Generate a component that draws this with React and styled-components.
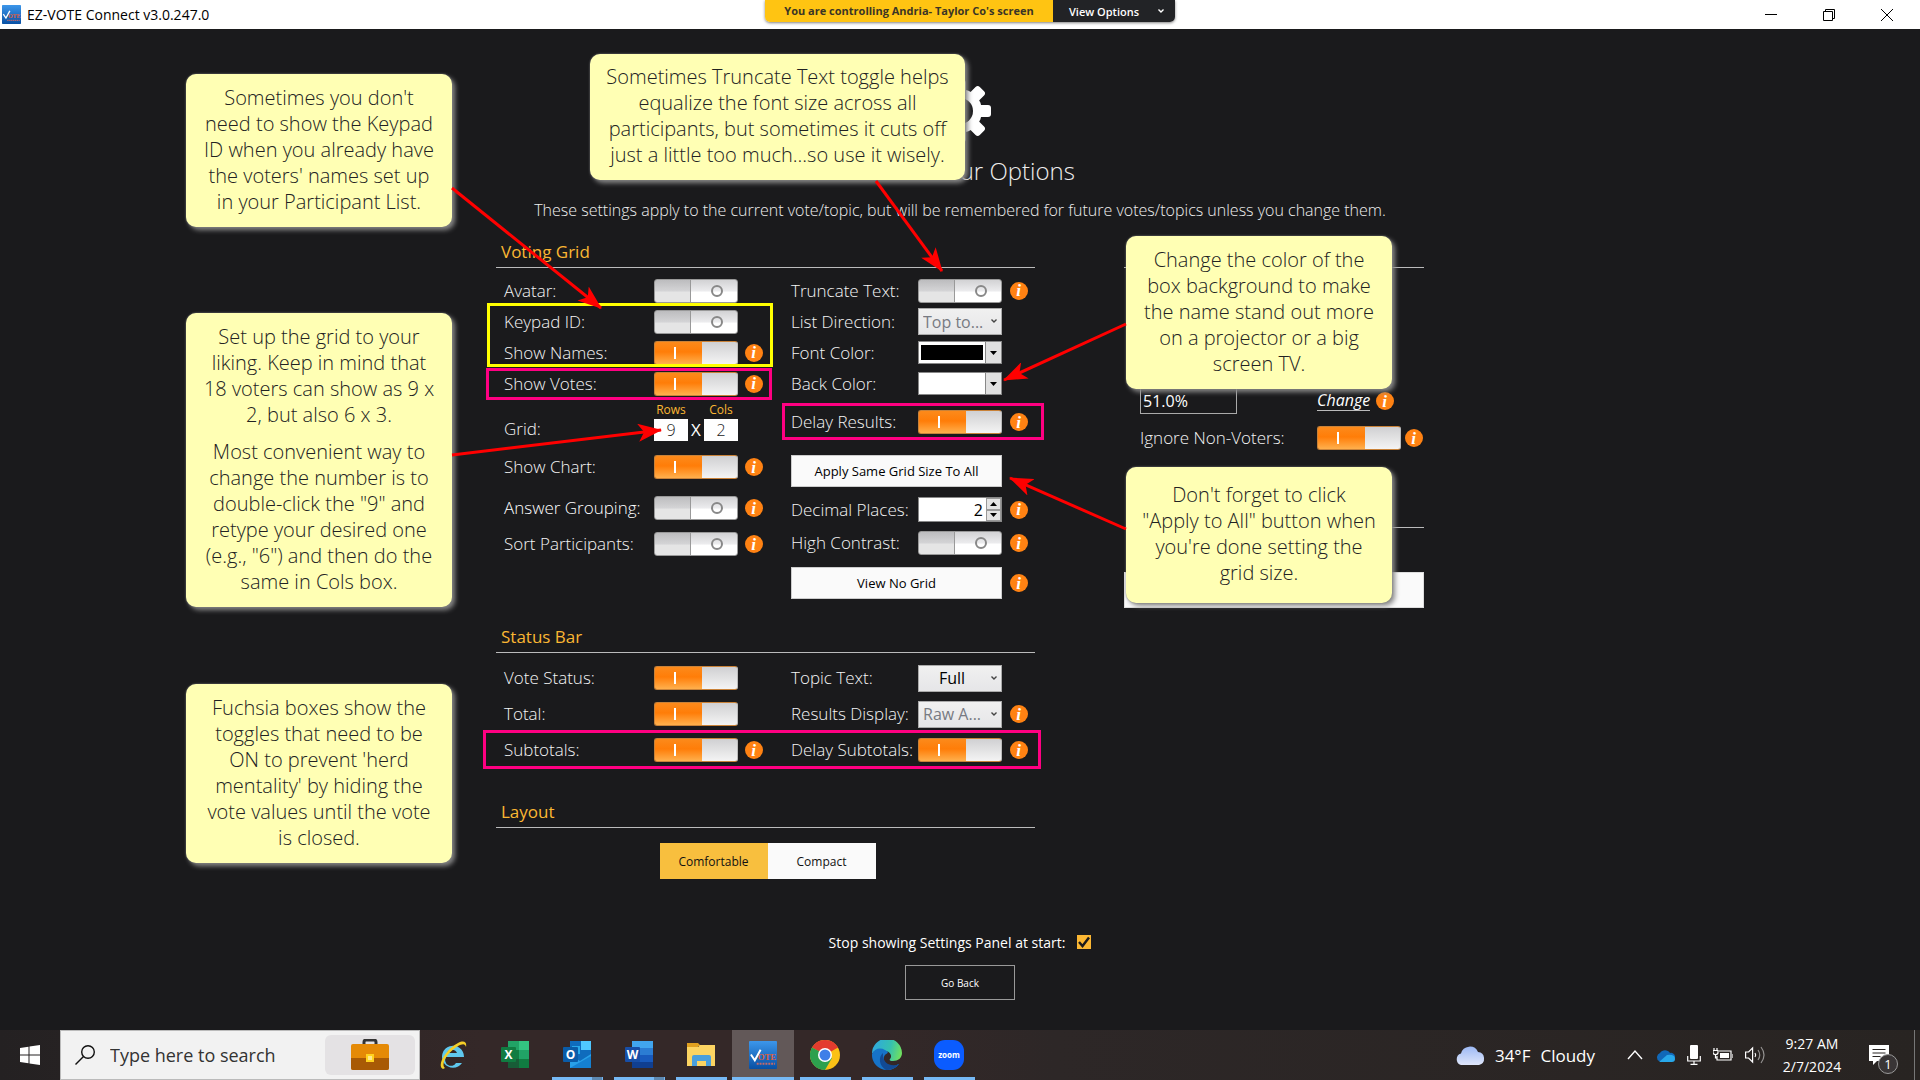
import React, { useState } from 'react'
import styled, { createGlobalStyle, css } from 'styled-components'

const GlobalStyle = createGlobalStyle`
*, *::after{ box-sizing:border-box; }
body{ margin:0; background:#1a1a1c; }
body, button, input, select{ font-family:"Open Sans", "Noto Sans", sans-serif; }
h1, h2, p{ margin:0; font-weight:300; }
`;

const Mark = () => (
  <svg width="100%" height="100%" viewBox="0 0 29 29" aria-hidden="true">
    <defs>
      <linearGradient id="mark" x1="0" y1="0" x2="0" y2="1">
        <stop offset="0" stopColor="#3c96ea" />
        <stop offset="1" stopColor="#0850a4" />
      </linearGradient>
    </defs>
    <rect width="29" height="29" rx="1" fill="url(#mark)" />
    <text x="9" y="20" fontFamily="Liberation Serif" fontWeight="700" fontSize="9" fill="#e0603c">OTE</text>
    <path d="M2 14l4 6L12 9" fill="none" stroke="#fff" strokeWidth="2" />
    <path d="M8 23.500h19" stroke="#c46a6a" strokeWidth="2" strokeDasharray="2 1" />
  </svg>
)

const Gear = () => (
  <svg width="62" height="62" viewBox="-31 -31 62 62" aria-hidden="true">
    <g fill="#fff">
      {[0, 45, 90, 135].map(angle => (
        <rect key={angle} x="-31" y="-6" width="62" height="12" rx="3" transform={`rotate(${angle})`} />
      ))}
      <circle r="22" />
    </g>
    <circle r="13" fill="#1a1a1c" />
  </svg>
)

const Chevron = () => (
  <svg width="8" height="6" viewBox="0 0 8 6" aria-hidden="true">
    <path d="M1.500 1.500L4 4l2.500-2.500" fill="none" stroke="currentColor" strokeWidth="1.400" />
  </svg>
)

const Triangle = ({ up }) => (
  <svg width="7" height="4" viewBox="0 0 7 4" aria-hidden="true">
    <path d={up ? 'M0 4h7L3.500 0z' : 'M0 0h7L3.500 4z'} fill="#000" />
  </svg>
)

const InfoButton = ({ about }) => (
  <Info type="button" aria-label={`About ${about}`}>i</Info>
)

const ToggleRow = ({ id, label, on, info, height, strong }) => {
  const [checked, setChecked] = useState(!!on)
  return (
    <Row $h={height}>
      <Label htmlFor={id} $strong={strong}>{label}</Label>
      <Switch id={id} type="checkbox" role="switch" checked={checked} onChange={() => setChecked(!checked)} />
      {info && <InfoButton about={label} />}
    </Row>
  )
}

const SelectRow = ({ id, label, value, muted, info, height }) => (
  <Row $h={height}>
    <Label htmlFor={id}>{label}</Label>
    <Picker $muted={muted}>
      <select id={id} defaultValue={value} disabled={muted}><option>{value}</option></select>
      <Chevron />
    </Picker>
    {info && <InfoButton about={label} />}
  </Row>
)

const ColorRow = ({ id, label, color }) => (
  <Row>
    <Label htmlFor={id}>{label}</Label>
    <ColorButton id={id} type="button" $color={color}>
      <span />
      <i><Triangle /></i>
    </ColorButton>
  </Row>
)

const arrows = [
  [452, 188, 601, 308],
  [876, 181, 942, 271],
  [1126, 324, 1004, 380],
  [452, 455, 661, 430],
  [1126, 529, 1010, 478],
]

const apps = [
  {
    name: 'Internet Explorer',
    icon: <>
      <path d="M8 17h18a11 11 0 1 0-2 6h-6a5 5 0 0 1-10-6zM9 13a5.500 5.500 0 0 1 10 0z" fill="#5fc8ee" fillRule="evenodd" />
      <path d="M5 29C-2 26 8 9 20 3c6-3 9-1 8 4-1-4-4-3-8-1C10 12 2 24 7 28z" fill="#f5cf27" />
    </>,
  },
  {
    name: 'Excel',
    icon: <>
      <path d="M8 1h21v27H8z" fill="#21a366" /><path d="M19 1h10v9H19z" fill="#33c481" />
      <path d="M8 10h11v9H8z" fill="#107c41" /><path d="M8 19h21v9H8z" fill="#185c37" /><path d="M19 19h10v9H19z" fill="#107c41" />
      <rect x="1" y="7" width="15" height="15" rx="1" fill="#107c41" />
      <text x="8.500" y="19" textAnchor="middle" fontFamily="Open Sans" fontWeight="700" fontSize="12" fill="#fff">X</text>
    </>,
  },
  {
    name: 'Outlook', running: true, stacked: true,
    icon: <>
      <path d="M8 1h21v27H8z" fill="#0f6cbd" /><path d="M19 1h10v9H19z" fill="#50c8ff" /><path d="M10 6h8v8h-8z" fill="#28a8ea" />
      <path d="M8 15l10 6 11-7v14H8z" fill="#28a0e8" /><path d="M8 28l21-12v12z" fill="#1580d0" />
      <rect x="1" y="7" width="15" height="15" rx="1" fill="#0a5ca8" />
      <text x="8.500" y="19" textAnchor="middle" fontFamily="Open Sans" fontWeight="700" fontSize="12" fill="#fff">O</text>
    </>,
  },
  {
    name: 'Word', running: true, stacked: true,
    icon: <>
      <path d="M8 1h21v7H8z" fill="#41a5ee" /><path d="M8 8h21v7H8z" fill="#2b7cd3" />
      <path d="M8 15h21v7H8z" fill="#185abd" /><path d="M8 22h21v6H8z" fill="#103f91" />
      <rect x="1" y="7" width="15" height="15" rx="1" fill="#174ea6" />
      <text x="8.500" y="19" textAnchor="middle" fontFamily="Open Sans" fontWeight="700" fontSize="12" fill="#fff">W</text>
    </>,
  },
  {
    name: 'File Explorer', running: true,
    icon: <>
      <path d="M1 3h11l3 3h-3v4H1z" fill="#e0a020" /><path d="M1 7h11l2-2h15v21H1z" fill="#fcd462" />
      <path d="M6 26V17q0-2 2-2h15q2 0 2 2v9h-5v-5h-9v5z" fill="#4a9fdc" />
    </>,
  },
  { name: 'EZ-VOTE Connect', running: true, active: true },
  {
    name: 'Chrome', running: true,
    icon: <>
      <circle cx="15" cy="15" r="15" fill="#fbc116" />
      <path d="M15 15L2 7.500A15 15 0 0 1 28 7.500z" fill="#e33b2e" /><path d="M15 7.500h13V8H15z" fill="#e33b2e" />
      <path d="M2 7.500A15 15 0 0 0 15 30l7-12z" fill="#2da04e" />
      <circle cx="15" cy="15" r="7" fill="#fff" /><circle cx="15" cy="15" r="5.500" fill="#3f7fe8" />
    </>,
  },
  {
    name: 'Edge', running: true,
    icon: <>
      <defs>
        <linearGradient id="edge" x1="0" y1="0.300" x2="1" y2="0.500">
          <stop offset="0" stopColor="#2fa8e0" /><stop offset="0.600" stopColor="#35c0b0" /><stop offset="1" stopColor="#6fe060" />
        </linearGradient>
      </defs>
      <path d="M0 14A15 15 0 0 1 30 13c0 5-4 8-9 8-3 0-4-1-3-2 3-4-1-8-5-8C6 9 2 10 0 14z" fill="url(#edge)" />
      <path d="M0 14c2-5 8-7 13-4 4 2 3 3 1 4-5 4-1 13 7 12 3 0 5-2 6-2-3 4-7 6-12 6A15 15 0 0 1 0 14z" fill="#1673c8" />
      <path d="M11 13c-5 4-4 13 3 17 5 0 10-2 13-6-6 3-17 1-16-11z" fill="#124a94" />
    </>,
  },
  {
    name: 'Zoom', running: true,
    icon: <>
      <rect width="30" height="30" rx="11" fill="#0b5cff" />
      <text x="15" y="18" textAnchor="middle" fontFamily="Open Sans" fontWeight="700" fontSize="8" fill="#fff">zoom</text>
    </>,
  },
]

const App = () => {
  const [compact, setCompact] = useState(false)
  return (
    <Page>
      <GlobalStyle />

      <TitleBar>
        <TitleIcon><Mark /></TitleIcon>
        <span>EZ-VOTE Connect v3.0.247.0</span>
        <WindowButtons>
          <button type="button" aria-label="Minimize">
            <svg width="12" height="12"><path d="M0 5.500h12" stroke="#000" /></svg>
          </button>
          <button type="button" aria-label="Restore">
            <svg width="12" height="12"><path d="M.5 2.500h9v9h-9zM2.500 2.500v-2h9v9h-2" fill="none" stroke="#000" /></svg>
          </button>
          <button type="button" aria-label="Close">
            <svg width="12" height="12"><path d="M0 0l12 12M12 0L0 12" stroke="#000" /></svg>
          </button>
        </WindowButtons>
        <ShareBanner>
          <p>You are controlling Andria- Taylor Co's screen</p>
          <button type="button">View Options <Chevron /></button>
        </ShareBanner>
      </TitleBar>

      <Header>
        <Gear />
        <h1>Choose Your Options</h1>
        <p>These settings apply to the current vote/topic, but will be remembered for future votes/topics unless you change them.</p>
      </Header>

      <Columns>
        <Main>
          <Heading>Voting Grid</Heading>
          <Fields>
            <div>
              <ToggleRow id="avatar" label="Avatar:" />
              <ToggleRow id="keypad" label="Keypad ID:" />
              <ToggleRow id="names" label="Show Names:" on info />
              <ToggleRow id="votes" label="Show Votes:" on info />
              <GridRow>
                <Label as="span">Grid:</Label>
                <GridSize>
                  <label>Rows<input defaultValue="9" /></label>
                  <span>X</span>
                  <label>Cols<input defaultValue="2" /></label>
                </GridSize>
              </GridRow>
              <ToggleRow id="chart" label="Show Chart:" on info height={36} />
              <ToggleRow id="grouping" label="Answer Grouping:" info height={46} strong />
              <ToggleRow id="sort" label="Sort Participants:" info height={26} />
            </div>
            <RightFields>
              <ToggleRow id="truncate" label="Truncate Text:" info />
              <SelectRow id="direction" label="List Direction:" value="Top to..." muted />
              <ColorRow id="font-color" label="Font Color:" color="#000" />
              <ColorRow id="back-color" label="Back Color:" color="#fff" />
              <ToggleRow id="delay" label="Delay Results:" on info height={46} />
              <ButtonRow $h={52}><WideButton type="button">Apply Same Grid Size To All</WideButton></ButtonRow>
              <Row $h={22}>
                <Label htmlFor="decimals">Decimal Places:</Label>
                <Spinner>
                  <input id="decimals" defaultValue="2" />
                  <div>
                    <button type="button" aria-label="More"><Triangle up /></button>
                    <button type="button" aria-label="Fewer"><Triangle /></button>
                  </div>
                </Spinner>
                <InfoButton about="Decimal Places" />
              </Row>
              <ToggleRow id="contrast" label="High Contrast:" info height={48} />
              <ButtonRow $h={32}><WideButton type="button">View No Grid</WideButton><InfoButton about="View No Grid" /></ButtonRow>
            </RightFields>
          </Fields>

          <Heading $gap={24}>Status Bar</Heading>
          <Fields>
            <div>
              <ToggleRow id="status" label="Vote Status:" on height={36} />
              <ToggleRow id="total" label="Total:" on height={36} />
              <ToggleRow id="subtotals" label="Subtotals:" on info height={36} />
            </div>
            <RightFields>
              <SelectRow id="topic" label="Topic Text:" value="Full" height={36} />
              <SelectRow id="results" label="Results Display:" value="Raw A..." muted info height={36} />
              <ToggleRow id="delay-sub" label="Delay Subtotals:" on info height={36} />
            </RightFields>
          </Fields>

          <Heading $gap={30}>Layout</Heading>
          <Segments>
            <Segment type="button" $active={!compact} onClick={() => setCompact(false)}>Comfortable</Segment>
            <Segment type="button" $active={compact} onClick={() => setCompact(true)}>Compact</Segment>
          </Segments>
        </Main>

        <Side>
          <Heading />
          <PercentRow>
            <input aria-label="Percentage" defaultValue="51.0%" />
            <a href="#change">Change</a>
            <InfoButton about="Percentage" />
          </PercentRow>
          <NonVoters>
            <ToggleRow id="non-voters" label="Ignore Non-Voters:" on info height={28} />
          </NonVoters>
          <Heading $gap={46} />
          <SideButton type="button" aria-label="Reset" />
        </Side>
      </Columns>

      <Startup>
        <label htmlFor="startup">Stop showing Settings Panel at start:</label>
        <Tick>
          <input id="startup" type="checkbox" defaultChecked />
          <svg width="14" height="14" viewBox="0 0 14 14" aria-hidden="true"><path d="M2 7l3.500 4L12 2.500" fill="none" stroke="#1a1a1c" strokeWidth="2.400" /></svg>
        </Tick>
      </Startup>
      <BackButton type="button">Go Back</BackButton>

      <Overlay>
        <Outline $x={-473} $y={303} $w={286} $h={64} $color="#ffff00" />
        <Outline $x={-474} $y={368} $w={286} $h={32} $color="#ff0082" />
        <Outline $x={-178} $y={403} $w={262} $h={37} $color="#ff0082" />
        <Outline $x={-477} $y={730} $w={558} $h={39} $color="#ff0082" />
        <Note $x={-774} $y={74} $w={266} $h={153}>
          <p>Sometimes you don't<br />need to show the Keypad<br />ID when you already have<br />the voters' names set up<br />in your Participant List.</p>
        </Note>
        <Note $x={-370} $y={54} $w={375} $h={126}>
          <p>Sometimes Truncate Text toggle helps<br />equalize the font size across all<br />participants, but sometimes it cuts off<br />just a little too much...so use it wisely.</p>
        </Note>
        <Note $x={-774} $y={313} $w={266} $h={294}>
          <p>Set up the grid to your<br />liking. Keep in mind that<br />18 voters can show as 9 x<br />2, but also 6 x 3.</p>
          <p>Most convenient way to<br />change the number is to<br />double-click the "9" and<br />retype your desired one<br />(e.g., "6") and then do the<br />same in Cols box.</p>
        </Note>
        <Note $x={-774} $y={684} $w={266} $h={179}>
          <p>Fuchsia boxes show the<br />toggles that need to be<br />ON to prevent 'herd<br />mentality' by hiding the<br />vote values until the vote<br />is closed.</p>
        </Note>
        <Note $x={166} $y={236} $w={266} $h={153}>
          <p>Change the color of the<br />box background to make<br />the name stand out more<br />on a projector or a big<br />screen TV.</p>
        </Note>
        <Note $x={166} $y={467} $w={266} $h={136}>
          <p>Don't forget to click<br />"Apply to All" button when<br />you're done setting the<br />grid size.</p>
        </Note>
        <Arrows viewBox="0 0 1920 1080" aria-hidden="true">
          <defs>
            <marker id="head" viewBox="0 0 24 18" refX="23" refY="9" markerWidth="24" markerHeight="18" markerUnits="userSpaceOnUse" orient="auto">
              <path d="M24 9L0 0l6 9-6 9z" fill="#f00" />
            </marker>
          </defs>
          {arrows.map(([x1, y1, x2, y2]) => (
            <line key={y1} x1={x1} y1={y1} x2={x2} y2={y2} stroke="#f00" strokeWidth="3" markerEnd="url(#head)" />
          ))}
        </Arrows>
      </Overlay>

      <Taskbar>
        <Start type="button" aria-label="Start">
          <svg width="20" height="20" viewBox="0 0 20 20" fill="#fff"><path d="M0 3l8.500-1.200v7.700H0zM9.500 1.600L20 0v9.500H9.500zM0 10.500h8.500v7.700L0 17zM9.500 10.500H20V20L9.500 18.400z" /></svg>
        </Start>
        <Search>
          <svg width="20" height="20" viewBox="0 0 20 20" fill="none" stroke="#111" strokeWidth="1.400"><circle cx="13" cy="7" r="6.300" /><path d="M8.500 11.500L.5 19.500" /></svg>
          <input aria-label="Search" placeholder="Type here to search" />
          <Highlight>
            <svg width="38" height="32" viewBox="0 0 38 32">
              <path d="M13 6V3q0-2 2-2h8q2 0 2 2v3" fill="none" stroke="#333" strokeWidth="3" />
              <rect y="5" width="38" height="26" rx="2" fill="#e58a06" /><path d="M0 19h38v10q0 2-2 2H2q-2 0-2-2z" fill="#a85a05" />
              <rect x="15" y="15" width="8" height="8" fill="#ffd21e" /><rect x="17" y="17" width="4" height="4" fill="#ffe98a" />
            </svg>
          </Highlight>
        </Search>
        <Apps>
          {apps.map(app => (
            <AppButton key={app.name} type="button" aria-label={app.name} $running={app.running} $active={app.active} $stacked={app.stacked}>
              {app.icon ? <svg width="30" height="30" viewBox="0 0 30 30">{app.icon}</svg> : <AppMark><Mark /></AppMark>}
            </AppButton>
          ))}
        </Apps>
        <Weather>
          <svg width="30" height="20" viewBox="0 0 30 20">
            <defs><linearGradient id="cloud" x1="0" y1="0" x2="0" y2="1"><stop offset="0" stopColor="#9db9f4" /><stop offset="1" stopColor="#dfe6fa" /></linearGradient></defs>
            <path d="M6 20a6 6 0 0 1 0-11.500A9 9 0 0 1 23 7a6.600 6.600 0 0 1 1 13z" fill="url(#cloud)" />
          </svg>
          <span>34°F</span>
          <span>Cloudy</span>
        </Weather>
        <Tray>
          <svg width="16" height="20" viewBox="0 0 16 20"><path d="M1 14l7-8 7 8" fill="none" stroke="#fff" strokeWidth="1.400" /></svg>
          <svg width="20" height="20" viewBox="0 0 20 20"><path d="M4 16a4.500 4.500 0 0 1 1-8A6 6 0 0 1 15 8a4 4 0 0 1 2 8z" fill="#1168b8" /><path d="M4 17l8-7q8-1 8 4 0 3-3 3z" fill="#28a8ea" /></svg>
          <svg width="14" height="20" viewBox="0 0 14 20"><rect x="3" y="0" width="8" height="14" rx="1" fill="#fff" /><path d="M.7 11v5h12.600v-5M7 16v3M3.500 19.300h7" fill="none" stroke="#fff" strokeWidth="1.200" /></svg>
          <svg width="20" height="20" viewBox="0 0 20 20"><path d="M6 6h12v9H4v-4M20 9v4M1 3v2M4 3v2M0 5.500h5v2q0 2-2.500 2T0 7.500zM2.500 9v4H4" fill="none" stroke="#fff" strokeWidth="1.200" /><path d="M7 8h9v5H7z" fill="#fff" /></svg>
          <svg width="20" height="20" viewBox="0 0 20 20" fill="none" stroke="#fff" strokeWidth="1.200"><path d="M.6 7v6h3l4 4V3l-4 4zM10 8q1.500 2 0 4" /><path d="M13 5q3.500 5 0 10M16 2q6 8 0 16" opacity=".5" /></svg>
        </Tray>
        <Clock><span>9:27 AM</span><span>2/7/2024</span></Clock>
        <Notices type="button" aria-label="Notifications">
          <svg width="20" height="20" viewBox="0 0 20 20"><path d="M0 0h20v16H8l-4 4v-4H0z" fill="#fff" /><path d="M3.500 4.500h13M3.500 8h13M3.500 11.500h8" stroke="#282422" /></svg>
          <b>1</b>
        </Notices>
      </Taskbar>
    </Page>
  )
}

export default App

const Page = styled.div`
position:relative; min-height:100vh; display:flex; flex-direction:column; background:#1a1a1c; color:#fff; overflow:hidden;
`;

/* title bar */

const TitleBar = styled.header`
position:relative; height:29px; padding-left:2px; display:flex; align-items:center; gap:6px; background:#fff; color:#000; font-size:14px;
`;
const TitleIcon = styled.span`
width:19px; height:19px; display:flex;
`;
const WindowButtons = styled.div`
margin-left:auto; margin-right:4px; display:flex;
button{ width:58px; height:28px; padding:0; border:none; background:none; display:flex; align-items:center; justify-content:center; }
`;
const ShareBanner = styled.div`
position:absolute; top:0; left:calc(50% - 195px); height:22px; display:flex; border-radius:0 0 5px 5px; overflow:hidden; font-size:11px; line-height:22px; box-shadow:0 1px 3px rgba(0,0,0,.5);
p{ width:288px; text-align:center; background:#ffc412; color:#3a3526; font-weight:700; }
button{ width:122px; padding:0 10px 0 16px; border:none; background:#222326; color:#fff; font-size:11px; font-weight:600; display:flex; align-items:center; justify-content:space-between; }
`;

/* settings */

const Header = styled.div`
padding-top:51px; display:flex; flex-direction:column; align-items:center; text-align:center; color:#eee;
h1{ margin-top:11px; font-size:24px; line-height:36px; }
p{ margin-top:9px; font-size:16px; line-height:24px; }
`;
const Columns = styled.div`
margin-top:16px; display:flex; justify-content:center; align-items:flex-start; gap:89px;
`;
const Main = styled.main`
width:539px;
`;
const Side = styled.aside`
width:300px;
`;
const Heading = styled.h2`
height:30px; margin-top:${p => p.$gap || 0}px; padding-left:5px; border-bottom:1px solid #bbb; color:#fbb733; font-size:17px; font-weight:400; line-height:28px;
`;
const Fields = styled.div`
padding:7px 0 0 8px; display:grid; grid-template-columns:287px 1fr;
`;
const Row = styled.div`
height:${p => p.$h || 31}px; display:grid; grid-template-columns:150px 84px 25px; align-items:center;
`;
const RightFields = styled.div`
${Row}{ grid-template-columns:127px 84px 26px; }
`;
const Label = styled.label`
font-size:17px; line-height:24px; font-weight:300; color:${p => (p.$strong ? '#fff' : '#f4f4f4')}; white-space:nowrap;
`;
const Info = styled.button`
justify-self:end; width:18px; height:18px; padding:0 1px 0 0; border:none; border-radius:50%; background:#ff8213; color:#fff; font:italic 700 17px/17px "Liberation Serif", serif; text-align:center;
`;
const Switch = styled.input`
appearance:none; position:relative; width:84px; height:24px; margin:0; border:1px solid #999; border-radius:3px;
background:linear-gradient(90deg, transparent 35px, #999 35px, #999 36px, transparent 36px), linear-gradient(90deg, rgba(0,0,0,.1) 35px, transparent 35px), linear-gradient(#d2d2d4, #ececee 50%, #fff 55%, #fff);
&::after{ content:""; position:absolute; left:56px; top:5px; width:12px; height:12px; border:2px solid #888; border-radius:50%; }
&:checked{ border-color:#c98238; border-right-color:#bbb; background:linear-gradient(#d0d0d2, #f4f4f4) right / 35px 100% no-repeat, linear-gradient(#fc8a1b, #ff7d08 45%, #ffb04d); }
&:checked::after{ left:19px; width:2px; border:none; border-radius:0; background:#fff; }
`;
const Picker = styled.div`
position:relative; height:27px;
select{ appearance:none; width:100%; height:27px; padding:0 4px; border:1px solid #aaa; border-radius:0; background:linear-gradient(#f0f0f0, #e6e6e8); color:#000; opacity:1; font-size:16px; font-weight:400; }
svg{ position:absolute; right:4px; top:10px; color:#444; }
${p => (p.$muted ? css`select{ color:#777a82; }` : css`select{ padding-left:20px; }`)}
`;
const ColorButton = styled.button`
height:23px; padding:0; border:1px solid #888; background:#fff; display:flex;
span{ flex:1; align-self:stretch; margin:3px 2px; background:${p => p.$color}; }
i{ width:16px; align-self:stretch; background:#e0e0e0; border-left:1px solid #888; display:flex; align-items:center; justify-content:center; }
`;
const GridRow = styled(Row)`
height:50px; padding-bottom:8px; align-items:end;
`;
const GridSize = styled.div`
display:flex; justify-content:space-between; align-items:flex-end; font-size:17px; line-height:22px;
label{ width:34px; display:flex; flex-direction:column; align-items:center; color:#fbb733; font-size:12px; line-height:18px; }
input{ width:34px; height:22px; padding:0; border:none; border-radius:0; background:#fff; color:#222; text-align:center; font-size:16px; font-weight:300; }
`;
const ButtonRow = styled.div`
height:${p => p.$h}px; display:grid; grid-template-columns:211px 26px; align-items:center;
`;
const WideButton = styled.button`
height:32px; padding:0; border:1px solid #ccc; background:#fafafa; color:#000; font-size:13px;
`;
const Spinner = styled.div`
height:25px; border:1px solid #888; background:#fff; display:flex;
input{ flex:1; min-width:0; padding:0 3px; border:none; background:none; text-align:right; font-size:16px; }
div{ width:15px; display:flex; flex-direction:column; }
button{ flex:1; padding:0; border:1px solid #999; background:#e4e4e4; display:flex; align-items:center; justify-content:center; }
`;
const Segments = styled.div`
margin-top:15px; padding-left:4px; display:flex; justify-content:center;
`;
const Segment = styled.button`
width:108px; height:36px; padding:0; border:none; background:${p => (p.$active ? '#f8bf3e' : '#fafafa')}; color:#111; font-size:12px;
`;
const PercentRow = styled.div`
margin-top:120px; padding-left:16px; display:grid; grid-template-columns:177px auto 24px; align-items:center; justify-content:start;
input{ width:97px; height:26px; padding:0 2px; border:1px solid #aaa; background:#1a1a1c; color:#fff; font-size:16px; }
a{ color:#fff; font-size:16px; font-style:italic; line-height:19px; text-decoration:none; border-bottom:1px solid #bbb; }
`;
const NonVoters = styled.div`
margin-top:10px; padding-left:16px;
${Row}{ grid-template-columns:177px 84px 22px; }
`;
const SideButton = styled.button`
width:100%; height:36px; margin-top:44px; border:1px solid #ddd; background:#fafafa;
`;
const Startup = styled.div`
margin-top:52px; display:flex; justify-content:center; gap:12px; font-size:14px; line-height:24px;
`;
const Tick = styled.span`
position:relative; width:14px; height:14px; margin-top:4px;
input{ appearance:none; width:14px; height:14px; margin:0; display:block; background:#fbb733; }
svg{ position:absolute; inset:0; pointer-events:none; }
`;
const BackButton = styled.button`
align-self:center; width:110px; height:35px; margin:10px 0 30px; padding:0; border:1px solid #999; background:none; color:#fff; font-size:10px;
`;

/* notes over the settings */

const Overlay = styled.div`
position:absolute; inset:0; pointer-events:none;
`;
const Outline = styled.div`
position:absolute; left:calc(50% + ${p => p.$x}px); top:${p => p.$y}px; width:${p => p.$w}px; height:${p => p.$h}px; border:3px solid ${p => p.$color};
`;
const Note = styled.div`
position:absolute; left:calc(50% + ${p => p.$x}px); top:${p => p.$y}px; width:${p => p.$w}px; height:${p => p.$h}px; padding-bottom:2px;
display:flex; flex-direction:column; justify-content:center; gap:11px; border-radius:10px; background:#ffffb4; color:#222; text-align:center; white-space:nowrap; font-size:20px; line-height:26px; box-shadow:0 0 2px #777, 3px 3px 5px #8a8a8a;
`;
const Arrows = styled.svg`
position:absolute; left:calc(50% - 960px); top:0; width:1920px; height:1080px;
`;

/* taskbar */

const Taskbar = styled.footer`
height:50px; margin-top:auto; display:flex; background:linear-gradient(90deg, #242122, #342828 25%, #342828 45%, #2d2727 55%, #282422);
button{ border:none; background:none; padding:0; color:#fff; }
`;
const Start = styled.button`
width:60px;
svg{ display:block; margin:auto; }
`;
const Search = styled.div`
width:360px; padding:0 4px 0 14px; display:flex; align-items:center; background:#f2f2f2; border:1px solid #bbb;
input{ flex:1; min-width:0; padding:0 0 0 15px; border:none; background:none; font-size:18px; }
input::placeholder{ color:#333; }
`;
const Highlight = styled.div`
width:90px; height:40px; border-radius:6px; background:#e4e2e4; display:flex; align-items:center; justify-content:center;
`;
const Apps = styled.nav`
padding-left:2px; display:flex;
`;
const AppButton = styled.button`
width:62px; display:flex; align-items:center; justify-content:center;
&&{ background:
  ${p => p.$stacked && 'linear-gradient(#5d88b0, #5d88b0) 46px 100% / 10px 3px no-repeat,'}
  linear-gradient(#76b9f5, #76b9f5) 50% 100% / ${p => (p.$active ? '62px' : p.$running ? '51px' : '0')} 3px no-repeat
  ${p => p.$active && ', #625858'}; }
`;
const AppMark = styled.span`
width:28px; height:28px; display:flex;
`;
const Weather = styled.div`
margin-left:auto; display:flex; align-items:center; gap:10px; font-size:17px;
`;
const Tray = styled.div`
margin-left:32px; display:flex; align-items:center; gap:12px;
`;
const Clock = styled.div`
width:94px; display:flex; flex-direction:column; justify-content:center; text-align:center; font-size:14px; line-height:23px;
`;
const Notices = styled.button`
position:relative; width:56px; margin-right:5px; border-right:1px solid #777 !important;
svg{ position:absolute; left:10px; top:15px; }
b{ position:absolute; left:19px; top:24px; width:20px; height:20px; border:1px solid #999; border-radius:50%; background:#393536; font-size:13px; line-height:18px; font-weight:400; }
`;
